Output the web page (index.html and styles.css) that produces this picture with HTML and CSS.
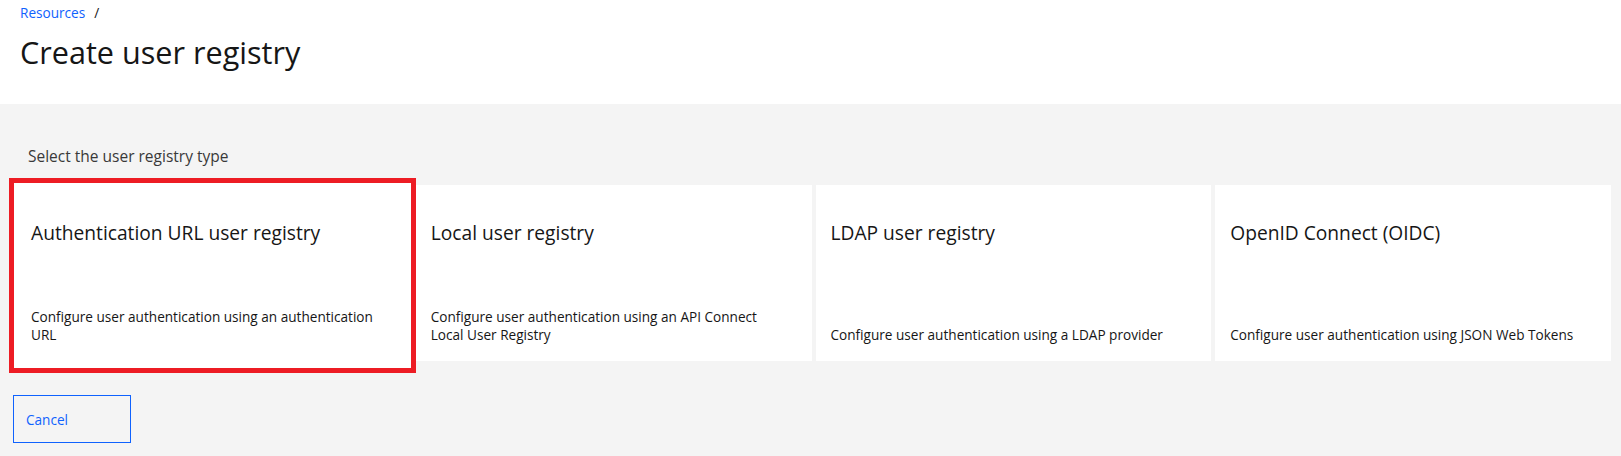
FILE: index.html
```html
<!DOCTYPE html>
<html lang="en">
<head>
<meta charset="utf-8">
<title>Create user registry</title>
<link rel="stylesheet" href="styles.css">
</head>
<body>
<div class="page">
  <header class="page-header">
    <nav class="breadcrumb">
      <a class="breadcrumb-link" href="#">Resources</a>
      <span class="breadcrumb-sep">/</span>
    </nav>
    <h1 class="page-title">Create user registry</h1>
  </header>
  <main class="content">
    <p class="section-label">Select the user registry type</p>
    <div class="tiles">
      <div class="tile tile-selected">
        <h2 class="tile-title">Authentication URL user registry</h2>
        <p class="tile-desc">Configure user authentication using an authentication URL</p>
      </div>
      <div class="tile">
        <h2 class="tile-title">Local user registry</h2>
        <p class="tile-desc">Configure user authentication using an API Connect Local User Registry</p>
      </div>
      <div class="tile">
        <h2 class="tile-title">LDAP user registry</h2>
        <p class="tile-desc">Configure user authentication using a LDAP provider</p>
      </div>
      <div class="tile">
        <h2 class="tile-title">OpenID Connect (OIDC)</h2>
        <p class="tile-desc">Configure user authentication using JSON Web Tokens</p>
      </div>
    </div>
    <button class="btn-cancel" type="button">Cancel</button>
  </main>
</div>
</body>
</html>
```
FILE: styles.css
```css
* { box-sizing: border-box; }
html, body { margin: 0; padding: 0; }
body {
  font-family: "Open Sans", "Noto Sans", sans-serif;
  color: #161616;
  background: #f4f4f4;
}
.page {
  min-height: 100vh;
  display: flex;
  flex-direction: column;
}
.page-header {
  background: #ffffff;
  padding: 4px 20px 32px 20px;
}
.breadcrumb {
  display: flex;
  align-items: center;
  font-size: 13.6px;
  line-height: 18px;
}
.breadcrumb-link {
  color: #0f62fe;
  text-decoration: none;
}
.breadcrumb-sep {
  margin-left: 9px;
  color: #161616;
}
.page-title {
  margin: 10px 0 0 0;
  font-size: 30.6px;
  line-height: 40px;
  font-weight: 400;
  color: #161616;
}
.content {
  flex: 1;
  background: #f4f4f4;
  padding: 42px 10px 0 13px;
}
.section-label {
  margin: 0 0 19px 15px;
  font-size: 15.5px;
  line-height: 20px;
  color: #393939;
}
.tiles {
  display: grid;
  grid-template-columns: repeat(4, 1fr);
  gap: 4px;
  margin-left: 3px;
}
.tile {
  background: #ffffff;
  height: 176px;
  padding: 35px 24px 17px 15px;
  display: flex;
  flex-direction: column;
  justify-content: space-between;
}
.tile-selected {
  position: relative;
  z-index: 0;
}
.tile-selected::before {
  content: "";
  position: absolute;
  top: -7px;
  left: -7px;
  right: -4px;
  bottom: -12px;
  border: 5px solid #ed1c24;
  background: #ffffff;
  z-index: -1;
}
.tile-title {
  margin: 0;
  font-size: 19.2px;
  line-height: 26px;
  font-weight: 400;
  color: #161616;
}
.tile-desc {
  margin: 0;
  font-size: 13.6px;
  line-height: 18px;
  color: #161616;
}
.btn-cancel {
  margin-top: 34px;
  width: 118px;
  height: 48px;
  display: flex;
  align-items: center;
  padding: 0 0 0 12px;
  border: 1px solid #0f62fe;
  background: transparent;
  color: #0f62fe;
  font-family: "Open Sans", "Noto Sans", sans-serif;
  font-size: 13.6px;
  cursor: pointer;
}
```
